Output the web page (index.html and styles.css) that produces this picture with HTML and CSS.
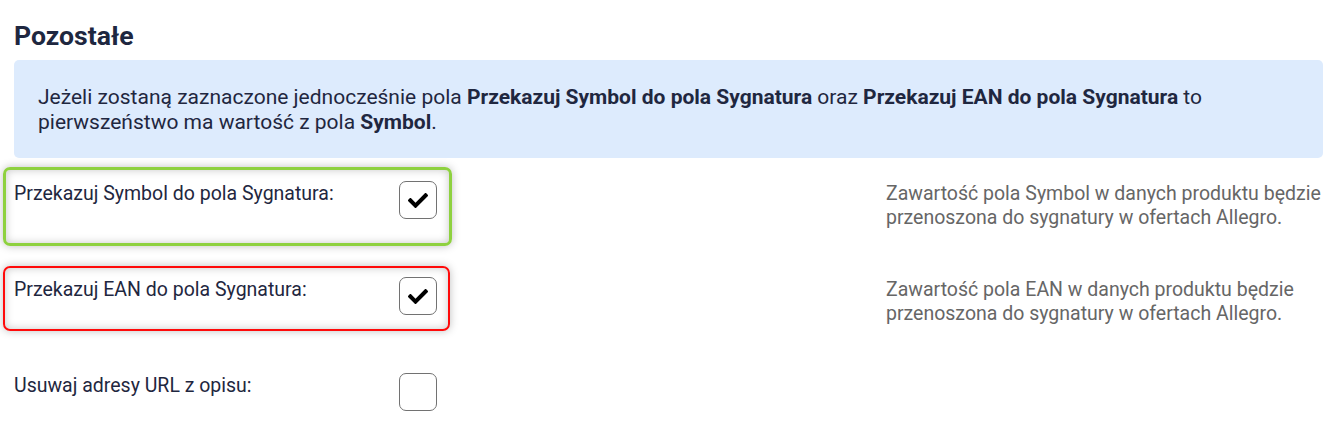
FILE: index.html
```html
<!DOCTYPE html>
<html lang="pl">
<head>
<meta charset="utf-8">
<title>Pozostałe</title>
<link rel="stylesheet" href="styles.css">
</head>
<body>
<div class="page">
  <h2 class="title">Pozostałe</h2>
  <div class="info">
    Jeżeli zostaną zaznaczone jednocześnie pola <b>Przekazuj Symbol do pola Sygnatura</b> oraz <b>Przekazuj EAN do pola Sygnatura</b> to pierwszeństwo ma wartość z pola <b>Symbol</b>.
  </div>

  <div class="row row--green">
    <label class="label" for="c1">Przekazuj Symbol do pola Sygnatura:</label>
    <span class="check checked" id="c1">
      <svg viewBox="0 64 512 384" width="20" height="15"><path d="M173.898 439.404l-166.4-166.4c-9.997-9.997-9.997-26.206 0-36.204l36.203-36.204c9.997-9.998 26.207-9.998 36.204 0L192 312.69 432.095 72.596c9.997-9.997 26.207-9.997 36.204 0l36.203 36.204c9.997 9.997 9.997 26.206 0 36.204l-294.4 294.401c-9.998 9.997-26.207 9.997-36.204-.001z"/></svg>
    </span>
    <p class="desc">Zawartość pola Symbol w danych produktu będzie przenoszona do sygnatury w ofertach Allegro.</p>
  </div>

  <div class="row row--red">
    <label class="label" for="c2">Przekazuj EAN do pola Sygnatura:</label>
    <span class="check checked" id="c2">
      <svg viewBox="0 64 512 384" width="20" height="15"><path d="M173.898 439.404l-166.4-166.4c-9.997-9.997-9.997-26.206 0-36.204l36.203-36.204c9.997-9.998 26.207-9.998 36.204 0L192 312.69 432.095 72.596c9.997-9.997 26.207-9.997 36.204 0l36.203 36.204c9.997 9.997 9.997 26.206 0 36.204l-294.4 294.401c-9.998 9.997-26.207 9.997-36.204-.001z"/></svg>
    </span>
    <p class="desc">Zawartość pola EAN w danych produktu będzie przenoszona do sygnatury w ofertach Allegro.</p>
  </div>

  <div class="row row--last">
    <label class="label" for="c3">Usuwaj adresy URL z opisu:</label>
    <span class="check" id="c3"></span>
    <p class="desc"></p>
  </div>
</div>
</body>
</html>
```

FILE: styles.css
```css
* { box-sizing: border-box; }

html, body {
  margin: 0;
  padding: 0;
  background: #ffffff;
}

body {
  font-family: Roboto, "Liberation Sans", Arial, sans-serif;
  color: #1f2740;
  font-size: 19.5px;
  line-height: 24px;
}

.page {
  padding: 20px 17px 0 14px;
}

.title {
  margin: 0;
  font-size: 26.6px;
  line-height: 32px;
  font-weight: 700;
  color: #1e2740;
}

.info {
  margin-top: 8px;
  height: 98px;
  padding: 25px 24px 0 24px;
  background: #ddebfd;
  border-radius: 5px;
  color: #1f2740;
  font-size: 21px;
  line-height: 25px;
}

.info b {
  font-weight: 700;
}

.row {
  position: relative;
  display: grid;
  grid-template-columns: 385px 38px 1fr;
  align-items: start;
  height: 38px;
  margin-bottom: 58px;
}

.row--last {
  margin-bottom: 0;
}

.info + .row {
  margin-top: 23px;
}

.label {
  padding-top: 1px;
  color: #1f2740;
  white-space: nowrap;
}

.check {
  width: 38px;
  height: 38px;
  border: 1px solid #727272;
  border-radius: 7px;
  background: #fff;
  display: flex;
  align-items: center;
  justify-content: center;
  position: relative;
  z-index: 1;
}

.check svg {
  fill: #000;
  display: block;
}

.desc {
  margin: 0 -17px 0 449px;
  padding-top: 1px;
  color: #666666;
}

.row--green::before,
.row--red::before {
  content: "";
  position: absolute;
  left: -11px;
  width: 443px;
  border-radius: 7px;
  box-shadow: 0 0 8px rgba(0, 0, 0, 0.25), inset 0 0 9px rgba(0, 0, 0, 0.22);
  pointer-events: none;
}

.row--green::before {
  top: -14px;
  height: 73px;
  border: 3px solid #8ed13f;
}

.row--red::before {
  top: -11px;
  height: 61px;
  border: 2px solid #ff0a0a;
}
```
